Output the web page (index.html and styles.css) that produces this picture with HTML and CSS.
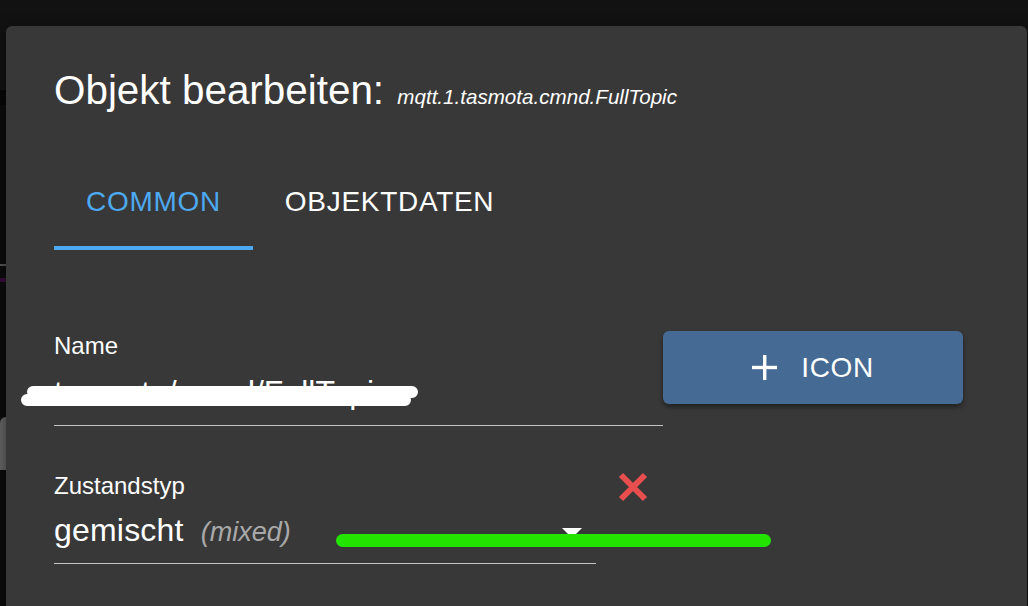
FILE: index.html
```html
<!DOCTYPE html>
<html lang="de">
<head>
<meta charset="utf-8">
<title>Objekt bearbeiten</title>
<link rel="stylesheet" href="styles.css">
</head>
<body>
<div class="page">
  <div class="backdrop-strip">
    <div class="strip s-top"></div>
    <div class="strip s-dark"></div>
    <div class="strip s-mid h159"></div>
    <div class="strip s-line"></div>
    <div class="strip s-mid h12"></div>
    <div class="strip s-purple"></div>
    <div class="strip s-mid h135"></div>
    <div class="strip s-block"></div>
    <div class="strip s-rest"></div>
  </div>
  <div class="dialog">
    <h2 class="title">Objekt bearbeiten: <span class="subtitle">mqtt.1.tasmota.cmnd.FullTopic</span></h2>
    <div class="tabs">
      <div class="tab active">COMMON</div>
      <div class="tab">OBJEKTDATEN</div>
    </div>
    <div class="row row-name">
      <div class="field field-name">
        <label class="label">Name</label>
        <div class="value">tasmota/cmnd/FullTopic</div>
      </div>
      <button class="icon-btn" type="button">
        <svg class="plus" width="25" height="25" viewBox="0 0 25 25"><rect x="11" y="0" width="3.4" height="25" fill="#fff"/><rect x="0" y="10.8" width="25" height="3.4" fill="#fff"/></svg>
        <span>ICON</span>
      </button>
    </div>
    <div class="row row-type">
      <div class="field field-select">
        <label class="label">Zustandstyp</label>
        <div class="value select-value">
          <span class="main">gemischt</span>
          <span class="hint">(mixed)</span>
          <svg class="arrow" width="20" height="10" viewBox="0 0 20 10"><path d="M0 0 L20 0 L10 10 Z" fill="#fff"/></svg>
        </div>
      </div>
      <svg class="clear-x" width="32" height="32" viewBox="0 0 32 32"><path d="M4 4 L28 28 M28 4 L4 28" stroke="#e84e4e" stroke-width="6" fill="none"/></svg>
    </div>
    <svg class="scribble" width="410" height="32" viewBox="0 0 410 32"><path d="M18 12 L397 12 M12 20 L390 20" stroke="#fff" stroke-width="12" stroke-linecap="round" fill="none"/></svg>
    <div class="green-mark"></div>
  </div>
</div>
</body>
</html>
```

FILE: styles.css
```css
* {
  box-sizing: border-box;
}

html, body {
  margin: 0;
  padding: 0;
  background: #121212;
  overflow: hidden;
}

body {
  font-family: "Liberation Sans", Arial, Helvetica, sans-serif;
  color: #fff;
}

.page {
  display: flex;
  width: 1028px;
  height: 606px;
}

.backdrop-strip {
  width: 6px;
  display: flex;
  flex-direction: column;
  flex-shrink: 0;
}

.strip { width: 6px; flex-shrink: 0; }
.s-top { height: 90px; background: #121212; }
.s-dark { height: 15px; background: #070707; }
.s-mid { background: #0c0c0c; }
.h159 { height: 159px; }
.h12 { height: 12px; }
.h135 { height: 135px; }
.s-line { height: 2px; background: #585858; }
.s-purple { height: 4px; background: #3a0b3c; }
.s-block { height: 53px; background: #676767; border-top-left-radius: 6px; }
.s-rest { flex: 1; background: #0c0c0c; }

.dialog {
  position: relative;
  margin-top: 26px;
  width: 1021px;
  height: 580px;
  background: #383838;
  border-radius: 6px 6px 0 0;
  padding: 40px 0 0 48px;
  box-shadow: 0 4px 16px rgba(0, 0, 0, 0.5);
}

.title {
  margin: 0;
  height: 48px;
  font-size: 40.4px;
  line-height: 48px;
  font-weight: 400;
  white-space: nowrap;
}

.subtitle {
  font-size: 20.6px;
  line-height: 1;
  font-style: italic;
  margin-left: 2px;
}

.tabs {
  display: flex;
  margin-top: 40px;
}

.tab {
  position: relative;
  height: 96px;
  padding: 0 32px;
  display: flex;
  align-items: center;
  font-size: 28px;
  letter-spacing: 0.7px;
  color: #fff;
}

.tab.active {
  color: #4da9f0;
}

.tab.active::after {
  content: "";
  position: absolute;
  left: 0;
  right: 0;
  bottom: 0;
  height: 4px;
  background: #4da9f0;
}

.row {
  display: flex;
  align-items: flex-start;
}

.row-name {
  margin-top: 81px;
}

.field-name {
  width: 609px;
  padding-top: 3px;
}

.label {
  display: block;
  font-size: 24px;
  line-height: 24px;
  color: #fff;
}

.value {
  margin-top: 15px;
  font-size: 32px;
  line-height: 38px;
  padding-bottom: 14px;
  border-bottom: 1px solid #c4c4c4;
  white-space: nowrap;
}

.icon-btn {
  width: 300px;
  height: 73px;
  border: none;
  border-radius: 6px;
  background: #456a93;
  color: #fff;
  font-family: inherit;
  font-size: 28px;
  letter-spacing: 0.6px;
  display: flex;
  align-items: center;
  justify-content: center;
  gap: 24px;
  box-shadow: 0 3px 5px rgba(0, 0, 0, 0.4);
  padding: 0;
}

.plus {
  display: block;
}

.row-type {
  margin-top: 48px;
}

.field-select {
  width: 542px;
}

.select-value {
  margin-top: 13px;
  padding-bottom: 12px;
  display: flex;
  align-items: baseline;
}

.main {
  letter-spacing: 0.2px;
}

.hint {
  margin-left: 17px;
  font-size: 27px;
  font-style: italic;
  color: #a9a9a9;
}

.arrow {
  margin-left: auto;
  margin-right: 14px;
  align-self: flex-start;
  margin-top: 17px;
}

.clear-x {
  margin-left: 21px;
  margin-top: -3px;
  display: block;
}

.scribble {
  position: absolute;
  left: 9px;
  top: 354px;
}

.green-mark {
  position: absolute;
  left: 330px;
  top: 508px;
  width: 435px;
  height: 13px;
  border-radius: 7px;
  background: #23e400;
}
```
